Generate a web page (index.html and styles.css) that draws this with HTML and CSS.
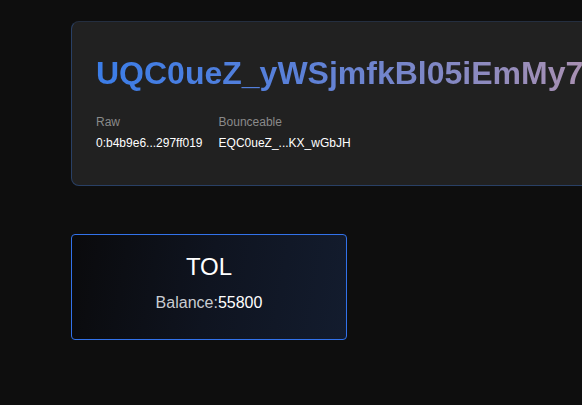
FILE: index.html
```html
<!DOCTYPE html>
<html lang="en">
<head>
<meta charset="utf-8">
<title>Wallet</title>
<link rel="stylesheet" href="styles.css">
</head>
<body>
<main class="page">
  <section class="address-card">
    <h1 class="address">UQC0ueZ_yWSjmfkBl05iEmMy7rOQ5zZ3ajXKX_wGeZmSa</h1>
    <div class="meta">
      <div class="meta-item">
        <div class="meta-label">Raw</div>
        <div class="meta-value">0:b4b9e6...297ff019</div>
      </div>
      <div class="meta-item">
        <div class="meta-label">Bounceable</div>
        <div class="meta-value">EQC0ueZ_...KX_wGbJH</div>
      </div>
    </div>
  </section>
  <section class="token-card">
    <div class="token-name">TOL</div>
    <div class="token-balance"><span class="balance-label">Balance:</span><span class="balance-value">55800</span></div>
  </section>
</main>
</body>
</html>
```
FILE: styles.css
```css
html, body {
  margin: 0;
  padding: 0;
  background: #0e0e0e;
  overflow: hidden;
  font-family: "Liberation Sans", Arial, sans-serif;
  color: #fff;
}
.page {
  padding: 21px 0 0 71px;
  display: flex;
  flex-direction: column;
  align-items: flex-start;
  width: 1400px;
}
.address-card {
  background: #212121;
  border: 1px solid rgba(59, 130, 246, 0.32);
  border-top-color: rgba(59, 130, 246, 0.14);
  border-radius: 8px;
  padding: 32px 40px 33px 24px;
  box-sizing: border-box;
}
.address {
  margin: 0;
  font-size: 32px;
  line-height: 1.2;
  font-weight: 700;
  white-space: nowrap;
  display: inline-block;
  background: linear-gradient(90deg, #3b7de8 0px, #5a80d8 200px, #a790b3 480px, #dca2a2 950px);
  -webkit-background-clip: text;
  background-clip: text;
  color: transparent;
}
.meta {
  display: flex;
  gap: 16px;
  margin-top: 21px;
}
.meta-item {
  display: flex;
  flex-direction: column;
  gap: 3px;
  font-size: 12px;
  line-height: 18px;
}
.meta-label {
  color: #8a8a8a;
}
.meta-value {
  color: #fff;
}
.token-card {
  margin-top: 48px;
  width: 276px;
  box-sizing: border-box;
  border: 1px solid #3272ea;
  border-radius: 4px;
  background: linear-gradient(100deg, #0a0a0c 0%, #0f1420 50%, #131c2e 100%);
  padding: 18px 16px 27px;
  text-align: center;
}
.token-name {
  font-size: 24px;
  line-height: 27.6px;
  color: #fff;
}
.token-balance {
  margin-top: 13px;
  font-size: 16px;
  line-height: 18.4px;
}
.balance-label {
  color: #c9ccd2;
}
.balance-value {
  color: #fff;
}
```
